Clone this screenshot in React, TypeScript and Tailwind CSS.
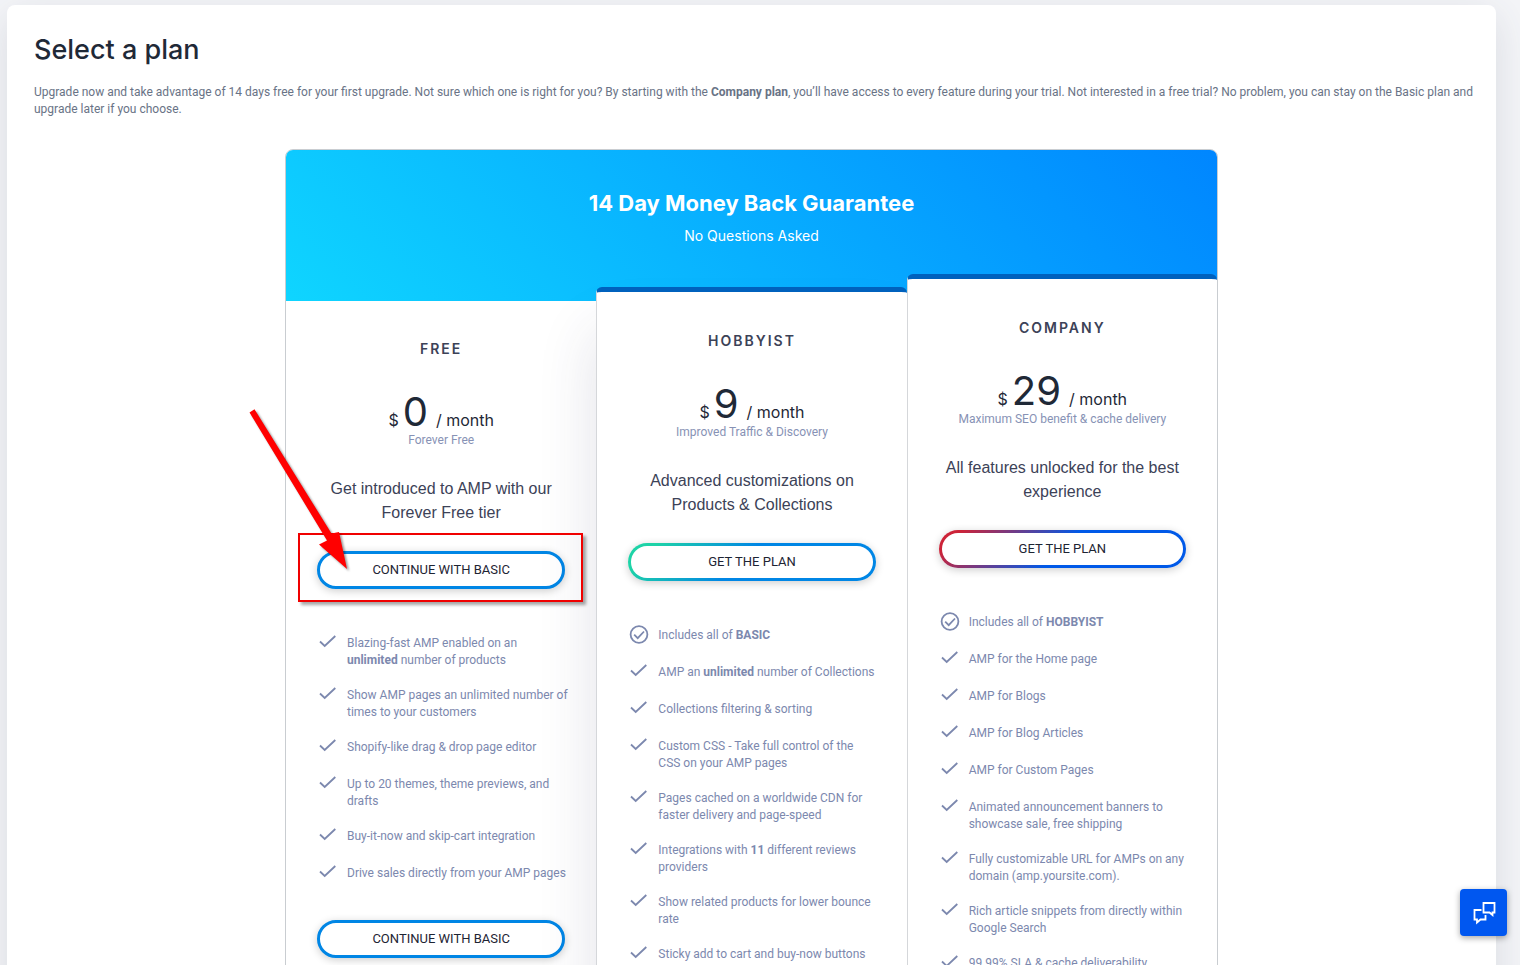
import React from 'react';
import clsx from 'clsx';

interface Feature {
  text: React.ReactNode;
  circled?: boolean;
}

interface Plan {
  name: string;
  price: number;
  note: string;
  description: string;
  cta: string;
  cardClass: string;
  buttonClass: string;
  features: Feature[];
}

const plans: Plan[] = [
  {
    name: 'FREE',
    price: 0,
    note: 'Forever Free',
    description: 'Get introduced to AMP with our Forever Free tier',
    cta: 'Continue with basic',
    cardClass: '',
    buttonClass: 'border-[#0086e5] bg-white',
    features: [
      { text: <>Blazing-fast AMP enabled on an <br /><b>unlimited</b> number of products</> },
      { text: 'Show AMP pages an unlimited number of times to your customers' },
      { text: 'Shopify-like drag & drop page editor' },
      { text: 'Up to 20 themes, theme previews, and drafts' },
      { text: 'Buy-it-now and skip-cart integration' },
      { text: 'Drive sales directly from your AMP pages' },
    ],
  },
  {
    name: 'HOBBYIST',
    price: 9,
    note: 'Improved Traffic & Discovery',
    description: 'Advanced customizations on Products & Collections',
    cta: 'Get the plan',
    cardClass: '-mt-[14px] pt-px rounded-t-md border-t-[5px] border-t-[#0061bd] border-l border-l-[#d5d7da] shadow-[0_45px_60px_rgba(50,50,93,0.14)]',
    buttonClass:
      'border-transparent [background:linear-gradient(#fff,#fff)_padding-box,linear-gradient(135deg,#1ed3a7_10%,#0086e5_46%)_border-box]',
    features: [
      { text: <>Includes all of <b>BASIC</b></>, circled: true },
      { text: <>AMP an <b>unlimited</b> number of Collections</> },
      { text: 'Collections filtering & sorting' },
      { text: <>Custom CSS - Take full control of the <br />CSS on your AMP pages</> },
      { text: 'Pages cached on a worldwide CDN for faster delivery and page-speed' },
      { text: <>Integrations with <b>11</b> different reviews providers</> },
      { text: 'Show related products for lower bounce rate' },
      { text: 'Sticky add to cart and buy-now buttons' },
    ],
  },
  {
    name: 'COMPANY',
    price: 29,
    note: 'Maximum SEO benefit & cache delivery',
    description: 'All features unlocked for the best experience',
    cta: 'Get the plan',
    cardClass: '-mt-[27px] pt-px rounded-t-md border-t-[5px] border-t-[#0061bd] border-l border-l-[#d5d7da]',
    buttonClass:
      'border-transparent [background:linear-gradient(#fff,#fff)_padding-box,linear-gradient(135deg,#cc2338_8%,#0059e8_50%)_border-box]',
    features: [
      { text: <>Includes all of <b>HOBBYIST</b></>, circled: true },
      { text: 'AMP for the Home page' },
      { text: 'AMP for Blogs' },
      { text: 'AMP for Blog Articles' },
      { text: 'AMP for Custom Pages' },
      { text: 'Animated announcement banners to showcase sale, free shipping' },
      { text: 'Fully customizable URL for AMPs on any domain (amp.yoursite.com).' },
      { text: 'Rich article snippets from directly within Google Search' },
      { text: '99.99% SLA & cache deliverability' },
    ],
  },
];

function CheckIcon({ circled }: { circled?: boolean }) {
  return (
    <svg viewBox="0 0 20 20" className="size-5 shrink-0 -mt-[2px]" fill="none" stroke="#7c88ae" strokeWidth="1.8" aria-hidden="true">
      {circled ? (
        <>
          <circle cx="10" cy="9.5" r="8.4" />
          <path d="M5.2 9.7 8.7 13.1 15 6.5" />
        </>
      ) : (
        <path d="M2 8.5 6.7 13 17.300 3" />
      )}
    </svg>
  );
}

function PlanButton({ plan }: { plan: Plan }) {
  return (
    <button
      type="button"
      className={clsx(
        "h-[38px] w-full rounded-full border-[3px] font-['Roboto',sans-serif] text-[13px] font-normal uppercase text-[#1d2433] shadow-[0_2px_8px_rgba(0,0,0,0.2)]",
        plan.buttonClass
      )}
    >
      {plan.cta}
    </button>
  );
}

function PlanCard({ plan }: { plan: Plan }) {
  return (
    <section className={clsx('bg-white px-[31px] pb-10 text-center', plan.cardClass)}>
      <h3 className="mt-[38px] text-sm leading-5 font-semibold tracking-[2px] text-[#3c4257]">{plan.name}</h3>
      <div className="mt-8 flex h-[41px] items-baseline justify-center text-[#1f2937]">
        <span className="mr-1 text-base">$</span>
        <span className="text-[40px] leading-[41px]">{plan.price}</span>
        <span className="ml-2 text-base">/ month</span>
      </div>
      <p className="font-['Roboto',sans-serif] text-xs leading-[17px] text-[#8792b5]">{plan.note}</p>
      <p className="mt-7 font-['Liberation_Sans',sans-serif] text-base leading-6 text-[#3c4257]">{plan.description}</p>
      <div className="mt-[26px]">
        <PlanButton plan={plan} />
      </div>
      <ul className="mt-[46px] -mr-[6px] mb-9 flex flex-col gap-[18px] pl-px text-left font-['Roboto',sans-serif] text-xs leading-[17px] text-[#7c88ae]">
        {plan.features.map((feature, index) => (
          <li key={index} className="flex min-h-[19px] items-start gap-[9px]">
            <CheckIcon circled={feature.circled} />
            <span>{feature.text}</span>
          </li>
        ))}
      </ul>
      <PlanButton plan={plan} />
    </section>
  );
}

function Annotation() {
  return (
    <>
      <div className="pointer-events-none absolute top-[384px] left-[13px] h-[69px] w-[285px] border-2 border-[#f00000] shadow-[3px_3px_3px_rgba(0,0,0,0.35)]" />
      <svg
        viewBox="0 0 110 170"
        className="pointer-events-none absolute top-[256px] -left-[38px] h-[170px] w-[110px] drop-shadow-[2px_2px_1px_rgba(0,0,0,0.4)]"
        fill="#ff0000"
        aria-hidden="true"
      >
        <path d="M2.5 7.5 7.5 4.3 84.5 128.5 92 127 100 164 72 139.5 80 135.500Z" />
      </svg>
    </>
  );
}

function App() {
  return (
    <div className="h-screen overflow-hidden bg-[#f4f5f8] pt-[5px] pr-6 pl-[7px] font-['Inter',sans-serif]">
      <main className="min-h-screen rounded-lg bg-white px-[27px] pt-[25px] pb-10 shadow-[0_10px_40px_rgba(60,66,87,0.14)]">
        <h1 className="text-[27px] leading-10 font-medium text-[#1f2937]">Select a plan</h1>
        <p className="mt-[14px] -mr-2 font-['Roboto',sans-serif] text-xs leading-[17px] text-[#697386]">
          Upgrade now and take advantage of 14 days free for your first upgrade. Not sure which one is right for you? By
          starting with the <b>Company plan</b>, you’ll have access to every feature during your trial. Not interested in
          a free trial? No problem, you can stay on the Basic plan and upgrade later if you choose.
        </p>

        <div className="relative mx-auto mt-[31px] max-w-[933px]">
          <div className="overflow-hidden rounded-lg border border-[#c9cdd1]">
            <header className="h-[151px] bg-[linear-gradient(45deg,#0fd5ff,#0086ff)] pt-[37px] text-center text-white">
              <h2 className="text-[22px] leading-8 font-bold">14 Day Money Back Guarantee</h2>
              <p className="mt-[5px] text-sm leading-6">No Questions Asked</p>
            </header>
            <div className="grid grid-cols-3">
              {plans.map(plan => (
                <PlanCard key={plan.name} plan={plan} />
              ))}
            </div>
          </div>
          <Annotation />
        </div>
      </main>

      <button
        type="button"
        aria-label="Open chat"
        className="fixed right-[13px] bottom-[29px] flex size-[47px] items-center justify-center rounded bg-[#0057f0] shadow-[0_2px_6px_rgba(0,0,0,0.35)]"
      >
        <svg viewBox="0 0 24 24" className="size-6" fill="none" stroke="#ffffff" strokeWidth="1.8" aria-hidden="true">
          <path d="M11.500 2H22.500V11.500H20.500V14L17.500 11.500H11.500Z" />
          <path d="M9.500 9H2.500V18.500H5V21.500L8.500 18.500H13.500V14" />
        </svg>
      </button>
    </div>
  );
}

export default App;
